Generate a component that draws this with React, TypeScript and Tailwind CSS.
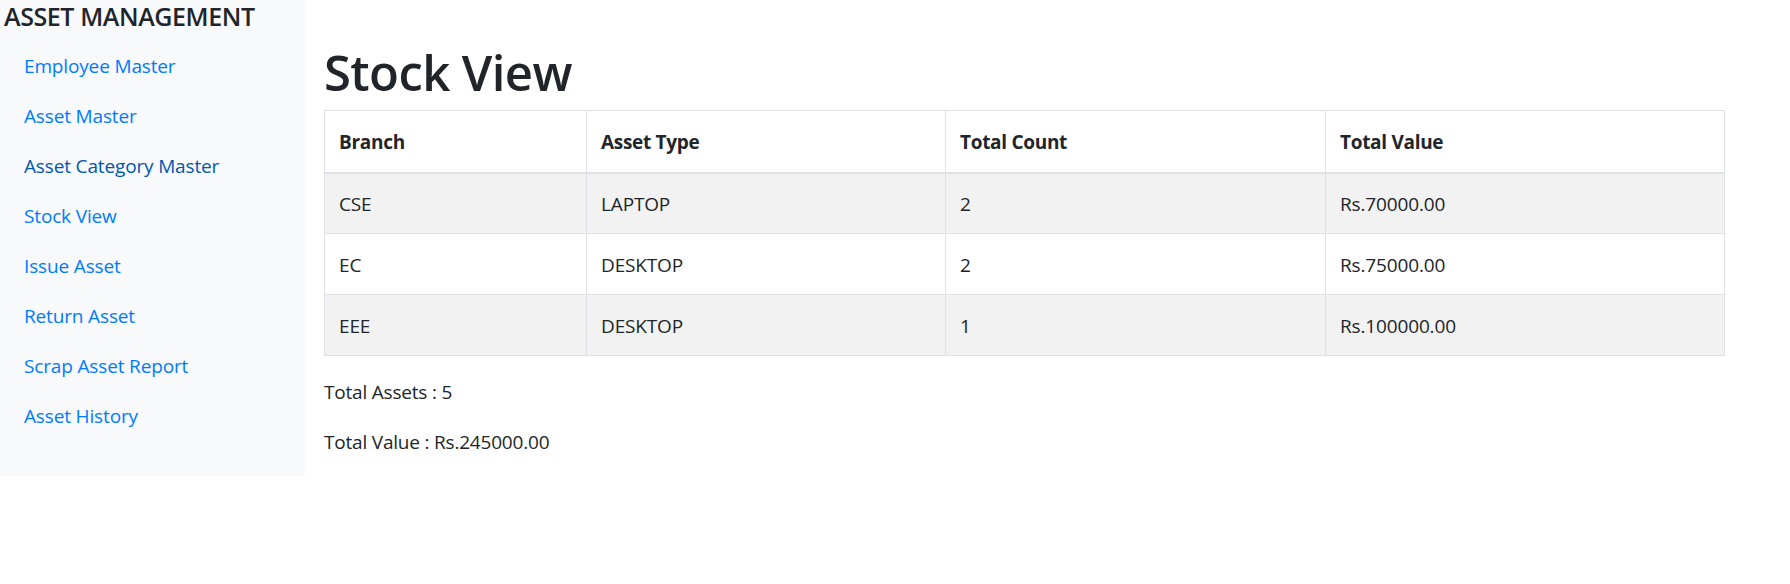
import React from 'react';

const navItems = [
  'Employee Master',
  'Asset Master',
  'Asset Category Master',
  'Stock View',
  'Issue Asset',
  'Return Asset',
  'Scrap Asset Report',
  'Asset History',
];

const rows = [
  { branch: 'CSE', type: 'LAPTOP', count: 2, value: 'Rs.70000.00' },
  { branch: 'EC', type: 'DESKTOP', count: 2, value: 'Rs.75000.00' },
  { branch: 'EEE', type: 'DESKTOP', count: 1, value: 'Rs.100000.00' },
];

export default function App() {
  return (
    <div className="flex items-start bg-white text-[#212529] font-['Open_Sans',sans-serif] min-h-[584px]">
      {/* Sidebar */}
      <div className="w-[305px] shrink-0 bg-[#f8f9fa] pb-[35px]">
        <h4 className="h-[41px] pl-[4px] pt-[1px] text-[25px] leading-[30px] tracking-[-0.4px] font-semibold text-[#212529]">
          ASSET MANAGEMENT
        </h4>
        <ul>
          {navItems.map((item) => (
            <li key={item} className="h-[50px] flex items-center pl-[24px]">
              <a
                href="#"
                className={`text-[19px] tracking-[-0.15px] ${
                  item === 'Asset Category Master' ? 'text-[#0056b3]' : 'text-[#007bff]'
                }`}
              >
                {item}
              </a>
            </li>
          ))}
        </ul>
      </div>

      {/* Main */}
      <div className="ml-[19px] w-[1401px] pt-[43px]">
        <h1 className="h-[58px] mb-[9px] text-[49px] leading-[58px] font-semibold tracking-[-0.6px]">Stock View</h1>

        <table className="w-full border-collapse text-[19px] mb-[20px]">
          <thead>
            <tr className="h-[62px]">
              <th className="w-[262px] border border-[#dee2e6] border-b-2 text-left font-bold pl-[14px] pt-[2px] tracking-[-0.3px]">Branch</th>
              <th className="w-[359px] border border-[#dee2e6] border-b-2 text-left font-bold pl-[14px] pt-[2px] tracking-[-0.3px]">Asset Type</th>
              <th className="w-[380px] border border-[#dee2e6] border-b-2 text-left font-bold pl-[14px] pt-[2px] tracking-[-0.3px]">Total Count</th>
              <th className="border border-[#dee2e6] border-b-2 text-left font-bold pl-[14px] pt-[2px] tracking-[-0.3px]">Total Value</th>
            </tr>
          </thead>
          <tbody>
            {rows.map((r, i) => (
              <tr key={r.branch} className={`h-[61px] ${i % 2 === 0 ? 'bg-[#f2f2f2]' : 'bg-white'}`}>
                <td className="border border-[#dee2e6] pl-[14px] pt-[2px] tracking-[-0.15px]">{r.branch}</td>
                <td className="border border-[#dee2e6] pl-[14px] pt-[2px] tracking-[-0.15px]">{r.type}</td>
                <td className="border border-[#dee2e6] pl-[14px] pt-[2px] tracking-[-0.15px]">{r.count}</td>
                <td className="border border-[#dee2e6] pl-[14px] pt-[2px] tracking-[-0.15px]">{r.value}</td>
              </tr>
            ))}
          </tbody>
        </table>

        <p className="h-[30px] leading-[30px] pt-[1px] text-[19px] mb-[20px] tracking-[-0.2px]">Total Assets : 5</p>
        <p className="h-[30px] leading-[30px] pt-[1px] text-[19px] tracking-[-0.2px]">Total Value : Rs.245000.00</p>
      </div>
    </div>
  );
}
